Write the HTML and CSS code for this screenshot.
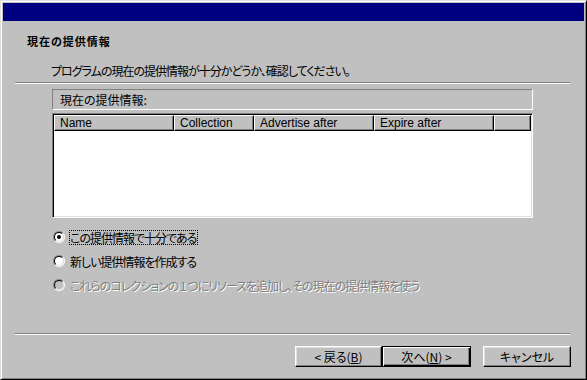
FILE: index.html
```html
<!DOCTYPE html>
<html lang="ja">
<head>
    <meta charset="UTF-8">
    <title>現在の提供情報</title>
    <link rel="stylesheet" href="styles.css">
</head>
<body>
    <div class="window">
        <div class="titlebar"></div>

        <div class="page">
            <h1 class="page-title">現在の提供情報</h1>
            <p class="page-desc">プログラムの現在の提供情報が十分かどうか、確認してください。</p>
            <div class="etched"></div>

            <div class="label-box">現在の提供情報:</div>

            <div class="listview">
                <div class="list-header">
                    <div class="col col-name">Name</div>
                    <div class="col col-collection">Collection</div>
                    <div class="col col-advertise">Advertise after</div>
                    <div class="col col-expire">Expire after</div>
                    <div class="col col-rest"></div>
                </div>
                <div class="list-body"></div>
            </div>

            <div class="options">
                <div class="option">
                    <span class="radio checked"></span>
                    <span class="option-text focused">この提供情報で十分である</span>
                </div>
                <div class="option">
                    <span class="radio"></span>
                    <span class="option-text">新しい提供情報を作成する</span>
                </div>
                <div class="option disabled">
                    <span class="radio"></span>
                    <span class="option-text">これらのコレクションの 1 つにリソースを追加し、その現在の提供情報を使う</span>
                </div>
            </div>

            <div class="etched bottom"></div>

            <div class="buttons">
                <button class="btn btn-back">&lt; 戻る(<u>B</u>)</button>
                <button class="btn btn-next default">次へ(<u>N</u>) &gt;</button>
                <button class="btn btn-cancel">キャンセル</button>
            </div>
        </div>
    </div>
</body>
</html>
```

FILE: styles.css
```css
:root {
    --face: #c0c0c0;
    --shadow: #808080;
    --light: #dfdfdf;
    --title: #000080;
}

body {
    margin: 0;
    font-family: "Noto Sans CJK JP", "Liberation Sans", sans-serif;
    font-size: 12px;
    font-feature-settings: "palt";
    color: #000;
}

.window {
    width: 587px;
    height: 380px;
    box-sizing: border-box;
    background: var(--face);
    border: 1px solid;
    border-color: var(--light) #000 #000 var(--light);
    box-shadow: inset 1px 1px #fff, inset -1px -1px var(--shadow);
    padding: 2px;
    display: flex;
    flex-direction: column;
}

.titlebar {
    height: 18px;
    background: var(--title);
}

.page {
    display: flex;
    flex-direction: column;
    align-items: flex-start;
}

.page-title {
    margin: 13px 0 0 24px;
    font-size: 11px;
    font-weight: 700;
    letter-spacing: 1px;
    line-height: 14px;
}

.page-desc {
    margin: 16px 0 0 48px;
    line-height: 14px;
    letter-spacing: -1px;
}

/* etched separator */
.etched {
    margin: 4px 0 0 12px;
    width: 555px;
    border-top: 1px solid var(--shadow);
    border-bottom: 1px solid #fff;
}
.etched.bottom {
    margin-top: 36px;
}

.label-box {
    margin: 5px 0 0 49px;
    width: 481px;
    height: 21px;
    box-sizing: border-box;
    border: 1px solid;
    border-color: var(--shadow) #fff #fff var(--shadow);
    padding-left: 7px;
    line-height: 19px;
}

.listview {
    margin: 3px 0 0 49px;
    width: 481px;
    height: 105px;
    box-sizing: border-box;
    border: 1px solid;
    border-color: var(--shadow) #fff #fff var(--shadow);
    box-shadow: inset 1px 1px #000, inset -1px -1px var(--light);
    padding: 1px;
    background: #fff;
    display: flex;
    flex-direction: column;
}

.list-header {
    display: flex;
    height: 16px;
    font-family: "Liberation Sans", sans-serif;
}
.col {
    box-sizing: border-box;
    height: 16px;
    background: var(--face);
    border: 1px solid;
    border-color: #fff #000 #000 #fff;
    box-shadow: inset -1px -1px var(--shadow);
    padding-left: 5px;
    line-height: 14px;
    white-space: nowrap;
}
.col-name { width: 120px; }
.col-collection { width: 80px; }
.col-advertise { width: 120px; }
.col-expire { width: 120px; }
.col-rest { flex: 1; }

.list-body {
    flex: 1;
}

.options {
    margin: 7px 0 0 50px;
    display: flex;
    flex-direction: column;
}
.option {
    height: 24px;
    display: flex;
    align-items: center;
}

.radio {
    width: 12px;
    height: 12px;
    box-sizing: border-box;
    border-radius: 50%;
    border: 1px solid;
    border-color: var(--shadow) #fff #fff var(--shadow);
    display: flex;
    align-items: center;
    justify-content: center;
    position: relative;
}
.radio::before {
    content: "";
    position: absolute;
    inset: 0;
    border-radius: 50%;
    border: 1px solid;
    border-color: #000 var(--light) var(--light) #000;
    background: #fff;
}
.radio.checked::after {
    content: "";
    position: relative;
    width: 4px;
    height: 4px;
    border-radius: 50%;
    background: #000;
}

.option-text {
    margin-left: 4px;
    border: 1px dotted transparent;
    line-height: 13px;
    padding: 0 1px 0 0;
    letter-spacing: -1px;
    white-space: nowrap;
}
.option-text.focused {
    border-color: #000;
}

.option.disabled .radio::before {
    background: var(--face);
}
.option.disabled .option-text {
    color: var(--shadow);
    text-shadow: 1px 1px #fff;
}

.buttons {
    margin: 11px 0 0 292px;
    display: flex;
}

.btn {
    height: 21px;
    box-sizing: border-box;
    background: var(--face);
    border: 1px solid;
    border-color: #fff #000 #000 #fff;
    box-shadow: inset -1px -1px var(--shadow), inset 1px 1px var(--light);
    font-family: inherit;
    font-size: 12px;
    font-feature-settings: "palt";
    color: #000;
    padding: 0;
    line-height: 17px;
}
.btn u {
    text-underline-offset: 1px;
}
.btn-back { width: 87px; }
.btn-next { width: 89px; }
.btn-cancel {
    width: 88px;
    margin-left: 12px;
}
.btn.default {
    border-color: #000;
    box-shadow: inset 1px 1px #fff, inset -1px -1px #000, inset -2px -2px var(--shadow);
}
```
